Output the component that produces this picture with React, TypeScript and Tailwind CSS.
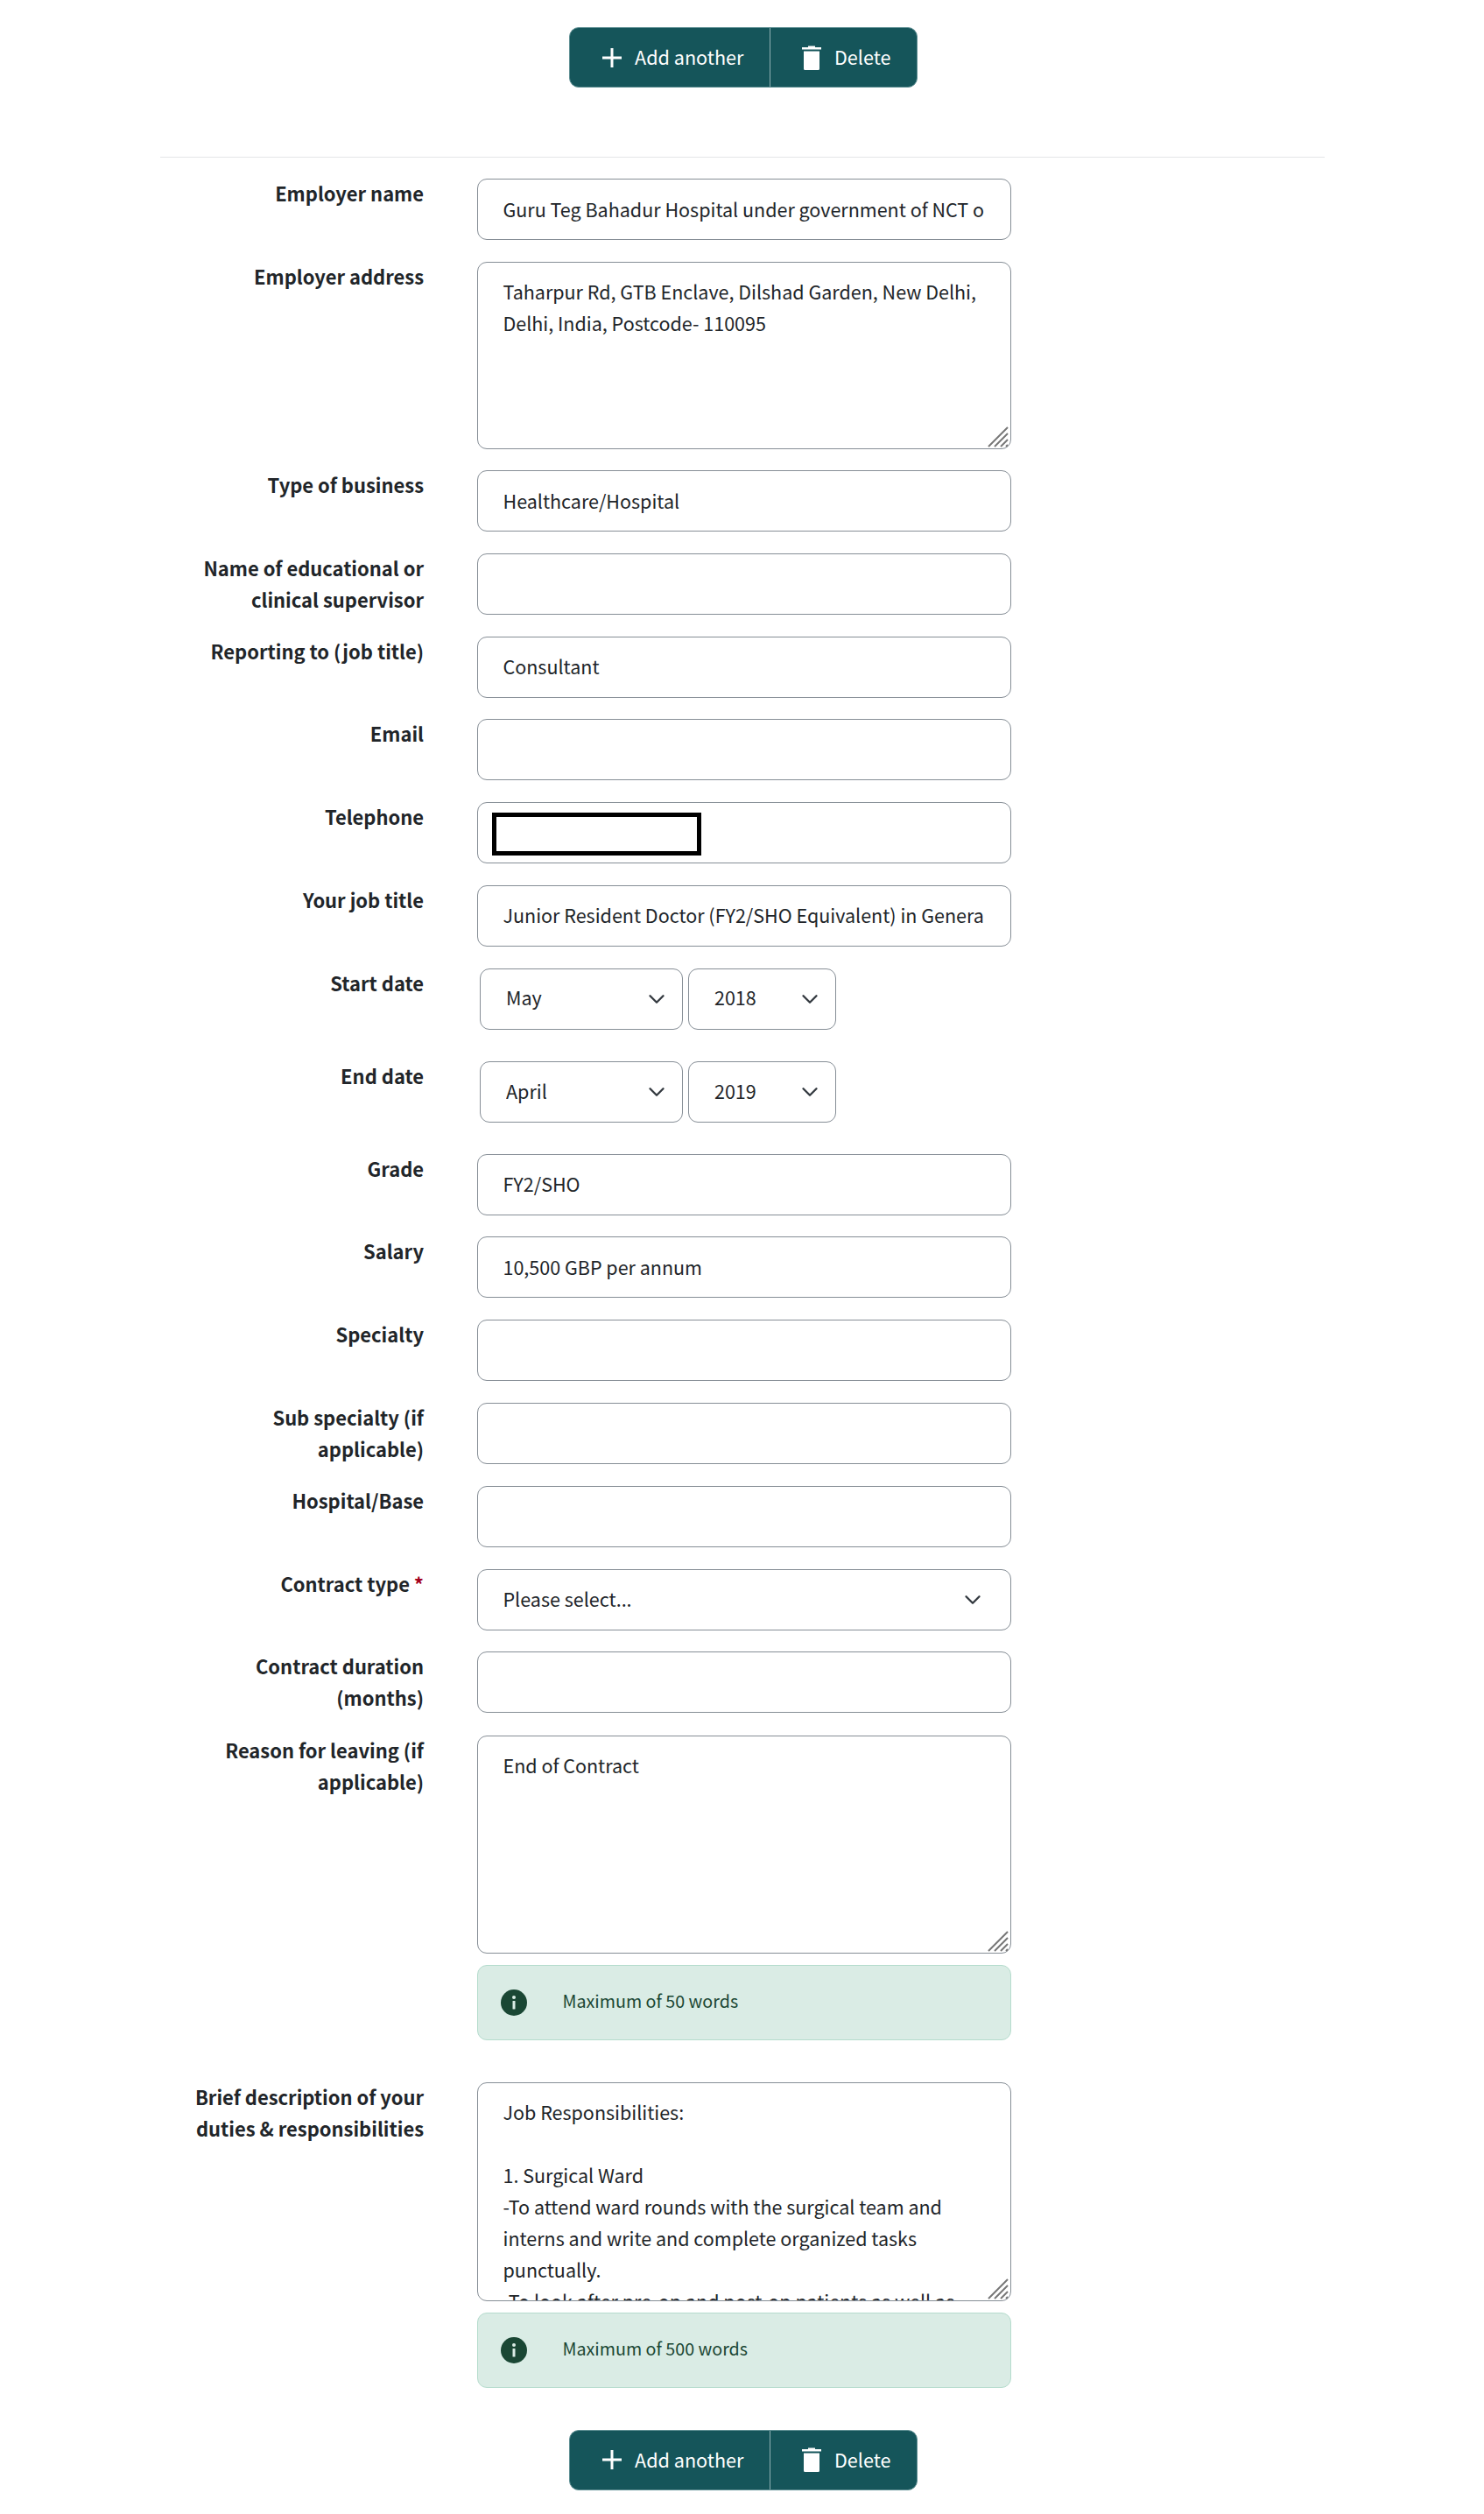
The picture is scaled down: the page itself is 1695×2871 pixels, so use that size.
import { ChevronDown } from 'lucide-react'

const font = '[font-family:"Noto_Sans_CJK_SC","Noto_Sans",sans-serif]'

function Label({ children, required }: { children: string; required?: boolean }) {
  return (
    <label className="-mt-[1px] -mb-[4px] w-[301px] shrink-0 pl-[25px] text-right text-[21.95px] leading-[36px] font-bold text-[#212529]">
      {children}
      {required && <span className="text-[#a4001d]"> *</span>}
    </label>
  )
}

function Row({ label, required, className, children }: { label: string; required?: boolean; className?: string; children: React.ReactNode }) {
  return (
    <div className={`flex gap-[60.5px] ${className ?? 'mb-[24.7px]'}`}>
      <Label required={required}>{label}</Label>
      <div className="w-[610.5px] shrink-0">{children}</div>
    </div>
  )
}

function TextInput({ value = '' }: { value?: string }) {
  return (
    <input
      readOnly
      value={value}
      className="block h-[70px] w-full rounded-[11px] border border-[#868e96] bg-white pr-[30px] pb-[2px] pl-[29px] text-[21.5px] leading-[36px] text-[#212529] outline-none"
    />
  )
}

function TextArea({ value, height }: { value: string; height: string }) {
  return (
    <div className={`relative ${height}`}>
      <textarea
        readOnly
        value={value}
        className="block h-full w-full resize-none overflow-hidden rounded-[11px] border border-[#868e96] bg-white pt-[15px] pr-[30px] pl-[29px] text-[21.5px] leading-[36px] text-[#212529] outline-none"
      />
      <svg className="absolute right-[3px] bottom-[2px] h-[24px] w-[24px]" viewBox="0 0 24 24" fill="none" stroke="#777777" strokeWidth="2">
        <path d="M1 23 23 1M8 23 23 8M15 23l8-8M21 23l2-2" />
      </svg>
    </div>
  )
}

function Select({ value, width, arrow = 'right-[15px]' }: { value: string; width: string; arrow?: string }) {
  return (
    <div className={`relative h-[70px] ${width}`}>
      <select
        defaultValue={value}
        className="block h-full w-full appearance-none rounded-[11px] border border-[#868e96] bg-white pb-[2px] pl-[29px] text-[21.5px] text-[#212529] outline-none"
      >
        <option>{value}</option>
      </select>
      <ChevronDown className={`pointer-events-none absolute top-[20px] h-[30px] w-[30px] text-[#343a40] ${arrow}`} strokeWidth={1.9} />
    </div>
  )
}

function InfoBox({ text }: { text: string }) {
  return (
    <div className="mt-[13px] flex h-[86px] items-center rounded-[11px] border border-[#b5dccd] bg-[#daece5] pl-[26px] text-[#1a4734]">
      <svg className="h-[30px] w-[30px] shrink-0" viewBox="0 0 30 30">
        <circle cx="15" cy="15" r="15" fill="#1a4734" />
        <circle cx="15" cy="9" r="2" fill="#daece5" />
        <rect x="13.500" y="13" width="3" height="9.500" rx="0.500" fill="#daece5" />
      </svg>
      <span className="mb-[4px] ml-[41px] text-[19.7px] leading-[32px]">{text}</span>
    </div>
  )
}

function ButtonGroup() {
  return (
    <div className="ml-[650px] flex h-[69px] w-[398px] overflow-hidden rounded-[11px] border border-[#5f8f93] bg-[#15555a] text-[21.6px] text-white">
      <button type="button" className="flex w-[229px] items-center gap-[15px] border-r border-[#8fb0b3] pl-[37px]">
        <svg className="h-[22px] w-[22px]" viewBox="0 0 22 22" fill="none" stroke="white" strokeWidth="3">
          <path d="M11 0v22M0 11h22" />
        </svg>
        Add another
      </button>
      <button type="button" className="flex flex-1 items-center gap-[15px] pl-[36px]">
        <svg className="h-[28px] w-[22px]" viewBox="0 0 22 28" fill="white">
          <path d="M7 0.500h8v1.500h7v2.500H0V2h7zM2 6.500h18V26.500a1.500 1.500 0 0 1-1.500 1.500h-15A1.500 1.500 0 0 1 2 26.500z" />
        </svg>
        Delete
      </button>
    </div>
  )
}

const duties = `Job Responsibilities:

1. Surgical Ward
-To attend ward rounds with the surgical team and interns and write and complete organized tasks punctually.
-To look after pre-op and post-op patients as well as`

export default function App() {
  return (
    <div className={`min-h-[2871px] bg-white pt-[31px] pb-[26px] ${font}`}>
      <ButtonGroup />
      <div className="mx-[183px] mt-[79px] w-[1330px] border-t border-[#e4e6e8] pt-[24px]">
        <Row label="Employer name"><TextInput value="Guru Teg Bahadur Hospital under government of NCT of Delhi" /></Row>
        <Row label="Employer address">
          <TextArea height="h-[214px]" value="Taharpur Rd, GTB Enclave, Dilshad Garden, New Delhi, Delhi, India, Postcode- 110095" />
        </Row>
        <Row label="Type of business"><TextInput value="Healthcare/Hospital" /></Row>
        <Row label="Name of educational or clinical supervisor"><TextInput /></Row>
        <Row label="Reporting to (job title)"><TextInput value="Consultant" /></Row>
        <Row label="Email"><TextInput /></Row>
        <Row label="Telephone">
          <div className="relative">
            <TextInput />
            <div className="absolute top-[12px] left-[17px] h-[49px] w-[239px] border-[5px] border-black bg-white" />
          </div>
        </Row>
        <Row label="Your job title"><TextInput value="Junior Resident Doctor (FY2/SHO Equivalent) in General Surgery" /></Row>
        <Row label="Start date" className="mb-[36.5px]">
          <div className="flex gap-[6px] pl-[3.5px]">
            <Select value="May" width="w-[232px]" />
            <Select value="2018" width="w-[169px]" />
          </div>
        </Row>
        <Row label="End date" className="mb-[35.5px]">
          <div className="flex gap-[6px] pl-[3.5px]">
            <Select value="April" width="w-[232px]" />
            <Select value="2019" width="w-[169px]" />
          </div>
        </Row>
        <Row label="Grade"><TextInput value="FY2/SHO" /></Row>
        <Row label="Salary"><TextInput value="10,500 GBP per annum" /></Row>
        <Row label="Specialty"><TextInput /></Row>
        <Row label="Sub specialty (if applicable)" className="mb-[25.5px]"><TextInput /></Row>
        <Row label="Hospital/Base"><TextInput /></Row>
        <Row label="Contract type" required>
          <Select value="Please select..." width="w-full" arrow="right-[29px]" />
        </Row>
        <Row label="Contract duration (months)" className="mb-[25.4px]"><TextInput /></Row>
        <Row label="Reason for leaving (if applicable)" className="mb-[48px]">
          <TextArea height="h-[249px]" value="End of Contract" />
          <InfoBox text="Maximum of 50 words" />
        </Row>
        <Row label="Brief description of your duties & responsibilities" className="mb-[48px]">
          <TextArea height="h-[250px]" value={duties} />
          <InfoBox text="Maximum of 500 words" />
        </Row>
      </div>
      <ButtonGroup />
    </div>
  )
}
